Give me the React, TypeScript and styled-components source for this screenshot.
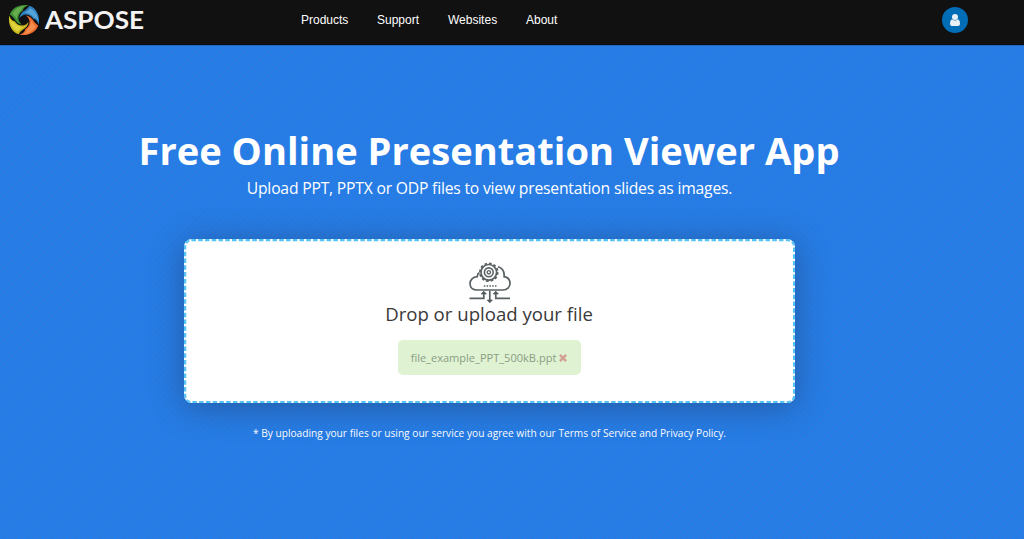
import React from "react";
import styled, { createGlobalStyle } from "styled-components";

const GlobalStyle = createGlobalStyle`
  *, *::before { box-sizing: border-box; }
  body { margin: 0; overflow: hidden; background: #277de4; }
`;

const Page = styled.div`
  width: 1024px;
  height: 539px;
  display: flex;
  flex-direction: column;
  font-family: "Open Sans", sans-serif;
  color: #fff;
`;

const Header = styled.header`
  height: 45px;
  flex: none;
  display: flex;
  align-items: flex-start;
  background: #111;
  box-shadow: inset 0 -1px 0 #080c12;
`;

const LogoLink = styled.div`
  width: 301px;
  height: 45px;
  svg { display: block; }
`;

const Nav = styled.nav`
  display: flex;
  gap: 29px;
  padding-top: 12px;
  font: 12px/16px "Liberation Sans", Arial, sans-serif;
`;

const NavItem = styled.span<{ $width: number }>`
  width: ${(p) => p.$width}px;
  white-space: nowrap;
`;

const Account = styled.div`
  width: 26px;
  height: 26px;
  margin: 7px 56px 0 auto;
  border-radius: 50%;
  background: #006db6;
  display: flex;
  align-items: center;
  justify-content: center;
`;

const Hero = styled.main`
  flex: 1;
  display: flex;
  flex-direction: column;
  align-items: center;
  padding: 78px 46px 0 0;
  border-top: 1px solid #2269bd;
  background: repeating-linear-gradient(135deg, #247ee9 0 1.4px, #2a7adf 2.1px 3.5px, #247ee9 4.24px);
`;

const Title = styled.h1`
  margin: -1px 0 0;
  font-size: 38.1px;
  line-height: 54px;
  font-weight: 700;
  white-space: nowrap;
`;

const Subtitle = styled.p`
  margin: 0;
  padding-left: 1px;
  font-size: 15.7px;
  letter-spacing: -0.2px;
  line-height: 22px;
  white-space: nowrap;
`;

const DropZone = styled.section`
  position: relative;
  width: 611px;
  height: 164px;
  margin-top: 40px;
  padding-top: 23px;
  display: flex;
  flex-direction: column;
  align-items: center;
  background: #fff;
  border-radius: 8px;
  box-shadow: 0 4px 32px rgba(30, 45, 75, 0.42);

  &::before {
    content: "";
    position: absolute;
    top: 0;
    left: 0;
    width: calc(100% / 0.75);
    height: calc(100% / 0.75);
    border: 3px dashed #55c3f6;
    border-radius: 10px;
    transform: scale(0.75);
    transform-origin: 0 0;
  }
`;

const Prompt = styled.div`
  font-size: 18.6px;
  line-height: 26px;
  margin-top: -3px;
  color: #3a3a3a;
  white-space: nowrap;
`;

const FileChip = styled.div`
  display: flex;
  align-items: center;
  justify-content: center;
  gap: 3px;
  width: 183px;
  height: 35px;
  margin-top: 13px;
  border-radius: 5px;
  background: #dff3d3;
  color: #8b9c83;
  font-size: 11.05px;
  white-space: nowrap;
`;

const Terms = styled.p`
  margin: 22px 0 0;
  padding-left: 1px;
  font-size: 10.17px;
  line-height: 16px;
  white-space: nowrap;
`;

const blades = [
  { base: "#3d8f35", light: "#74b657" },
  { base: "#2f7fc0", light: "#62b0e2" },
  { base: "#ec6a2c", light: "#f79a58" },
  { base: "#c9b91f", light: "#e6dc4a" },
];

const Logo = () => (
  <svg width="150" height="45" viewBox="0 0 150 45">
    {blades.map((b, i) => (
      <g key={b.base} transform={`translate(24 20) rotate(${i * 90})`}>
        <path d="M4.5 -14.8C-4 -16.3 -12.3 -12.3 -14.2 -5.5C-12.5 -4.2 -11 -3 -10 -1.5C-8 2 -5.5 4.2 -1.8 4.6C-4 3.2 -5.4 1 -5.6 -1.8C-5.6 -5 -4 -7.5 -1 -9.5C-1 -11 0 -13 4.5 -14.8Z" fill={b.base} />
        <path d="M1.5 -14.3C-4.5 -14 -9.5 -11 -11.8 -6.2C-9.6 -4.6 -8.2 -2.6 -7.2 -.6C-7 -4.5 -5.6 -7.5 -2.8 -9.6C-2.4 -11.6 -1.2 -13.2 1.5 -14.3Z" fill={b.light} opacity=".75" />
      </g>
    ))}
    <text x="44.7" y="29.3" fill="#f3f3f3" fontFamily="Lato, sans-serif" fontSize="24.3" fontWeight="700" textLength="99.5" lengthAdjust="spacingAndGlyphs">ASPOSE</text>
  </svg>
);

const UserIcon = () => (
  <svg width="12" height="14" viewBox="0 0 12 14" fill="#e9f0f5">
    <circle cx="6" cy="4" r="3" />
    <path d="M3.2 6.2Q6 9 8.8 6.2Q11 7 11 10.7Q11 13 9 13H3Q1 13 1 10.7Q1 7 3.2 6.2Z" />
  </svg>
);

const CloudArt = styled.svg`
  flex: none;
  margin-left: 1px;
`;

const CloudIcon = () => (
  <CloudArt width="42" height="42" viewBox="0 0 42 42" fill="none" stroke="#5a6163" strokeWidth="1.7">
    <path d="M10.5 10.5C8.8 11.4 8.3 13 8.2 14.6C3.9 14.8 1 17.9 1 21.5C1 25.5 4 28 8 28H34C38 28 41 25.2 41 21.5C41 18 38.5 15.3 35.1 14.7C35.6 9.5 33.5 6 28.9 4.8" />
    <circle cx="19.8" cy="10.3" r="7.8" />
    <circle cx="19.8" cy="10.3" r="8.9" strokeWidth="1.8" strokeDasharray="2.6 2.06" />
    <circle cx="19.8" cy="10.3" r="4.4" strokeWidth="1.6" />
    <circle cx="19.8" cy="10.3" r="1.7" strokeWidth="1.3" />
    <path d="M14.8 24H27.5" strokeWidth="1.4" strokeDasharray="1.5 1.3" />
    <path d="M.5 36.3H14.8V31M41 36.3H26.8V31M20.8 29V38" />
    <path d="M12.2 32L14.8 29.2L17.4 32ZM24.2 32L26.8 29.2L29.4 32ZM18.2 38L20.8 40.8L23.4 38Z" fill="#4d5557" strokeWidth=".8" />
  </CloudArt>
);

const RemoveIcon = () => (
  <svg width="8" height="8" viewBox="0 0 8 8" stroke="#d3a294" strokeWidth="2.6">
    <path d="M.9 .9L7.1 7.1M7.1 .9L.9 7.1" />
  </svg>
);

const links = [
  { label: "Products", width: 47 },
  { label: "Support", width: 42 },
  { label: "Websites", width: 49 },
  { label: "About", width: 32 },
];

export default function App() {
  return (
    <Page>
      <GlobalStyle />
      <Header>
        <LogoLink><Logo /></LogoLink>
        <Nav>
          {links.map((l) => <NavItem key={l.label} $width={l.width}>{l.label}</NavItem>)}
        </Nav>
        <Account><UserIcon /></Account>
      </Header>
      <Hero>
        <Title>Free Online Presentation Viewer App</Title>
        <Subtitle>Upload PPT, PPTX or ODP files to view presentation slides as images.</Subtitle>
        <DropZone>
          <CloudIcon />
          <Prompt>Drop or upload your file</Prompt>
          <FileChip>file_example_PPT_500kB.ppt<RemoveIcon /></FileChip>
        </DropZone>
        <Terms>* By uploading your files or using our service you agree with our Terms of Service and Privacy Policy.</Terms>
      </Hero>
    </Page>
  );
}
